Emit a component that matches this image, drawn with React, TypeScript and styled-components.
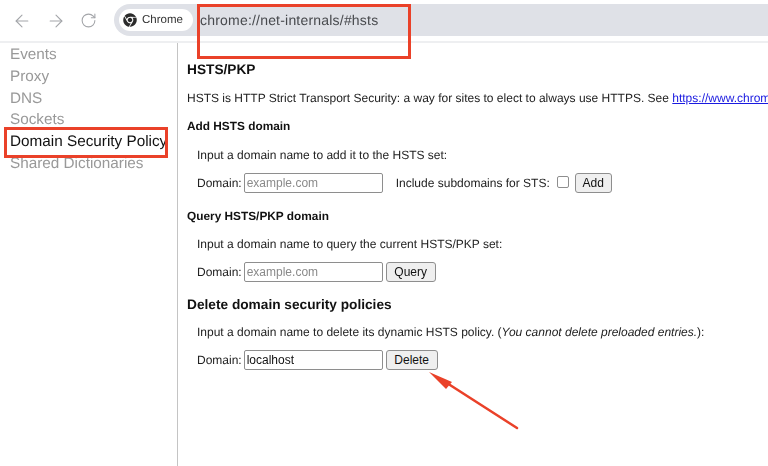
import { ArrowLeft, ArrowRight, RotateCw } from "lucide-react";
import { FaChrome } from "react-icons/fa";
import styled, { createGlobalStyle } from "styled-components";

const GlobalStyle = createGlobalStyle`
	html, body {
		margin: 0;
		padding: 0;
		background: #fff;
		overflow: hidden;
	}
	body {
		font-family: "Liberation Sans", Arial, sans-serif;
		color: #222;
		text-rendering: geometricPrecision;
	}
`;

const Page = styled.div`
	position: relative;
	width: 768px;
	height: 466px;
	overflow: hidden;
	filter: blur(0.35px);
`;

const Toolbar = styled.header`
	display: flex;
	align-items: center;
	height: 43px;
	padding-left: 12px;
	box-sizing: border-box;
	border-bottom: 2px solid #eeeff1;
`;

const NavIcons = styled.div`
	display: flex;
	align-items: center;
	gap: 14px;
	width: 102px;
	color: #a3a5a9;
`;

const Omnibox = styled.div`
	flex: 1;
	display: flex;
	align-items: center;
	gap: 7px;
	height: 32px;
	margin-bottom: 1px;
	padding-left: 5px;
	background: #dfe1e7;
	border-radius: 16px 0 0 16px;
`;

const Chip = styled.div`
	display: flex;
	align-items: center;
	gap: 5px;
	width: 74px;
	height: 22px;
	padding-left: 4px;
	box-sizing: border-box;
	background: #fff;
	border-radius: 11px;
	font-size: 11.5px;
	color: #333;
`;

const Url = styled.span`
	font-size: 14px;
	letter-spacing: 0.2px;
	color: #47494d;
`;

const Body = styled.div`
	display: flex;
	height: 423px;
`;

const Sidebar = styled.nav`
	display: flex;
	flex-direction: column;
	width: 178px;
	box-sizing: border-box;
	padding: 1px 0 0 10px;
	border-right: 1px solid #c4c4c4;
	white-space: nowrap;
	overflow: hidden;
`;

const NavItem = styled.div<{ $active?: boolean }>`
	height: 21.8px;
	line-height: 21.8px;
	font-size: 15.3px;
	color: ${(p) => (p.$active ? "#111" : "#999")};
`;

const Content = styled.main`
	flex: 1;
	display: flex;
	flex-direction: column;
	padding: 17px 0 0 9px;
	overflow: hidden;
	white-space: nowrap;
	font-size: 12px;
`;

const MainTitle = styled.h1<{ $height?: number }>`
	margin: 0;
	height: ${(p) => p.$height ?? 20}px;
	line-height: 20px;
	font-size: 13.7px;
	font-weight: 700;
	color: #111;
`;

const SubTitle = styled.h2<{ $height?: number }>`
	margin: 0;
	height: ${(p) => p.$height ?? 20}px;
	line-height: 20px;
	font-size: 11.85px;
	font-weight: 700;
	color: #111;
`;

const Text = styled.p<{ $indent?: boolean }>`
	margin: 8px 0;
	height: 20px;
	line-height: 20px;
	padding-left: ${(p) => (p.$indent ? "10px" : "0")};
	color: #222;
`;

const Link = styled.a`
	color: #1a1ae0;
	text-decoration: underline;
`;

const FormRow = styled.div`
	display: flex;
	align-items: center;
	height: 20px;
	padding-left: 10px;
	margin-bottom: 13px;
	color: #222;
`;

const DomainInput = styled.input`
	width: 139px;
	height: 20px;
	box-sizing: border-box;
	margin: 0 3px 0 2px;
	padding: 0 2px;
	border: 1px solid #8e8e8e;
	border-radius: 2px;
	font-family: inherit;
	font-size: 12px;
	color: #111;
	&::placeholder {
		color: #8a8a8a;
		opacity: 1;
	}
`;

const Button = styled.button<{ $width: number }>`
	width: ${(p) => p.$width}px;
	height: 20px;
	box-sizing: border-box;
	padding: 0;
	background: #efefef;
	border: 1px solid #8e8e8e;
	border-radius: 3px;
	font-family: inherit;
	font-size: 12px;
	color: #111;
`;

const SubdomainLabel = styled.label`
	display: flex;
	align-items: center;
	margin-left: 10px;
`;

const Check = styled.span`
	display: block;
	width: 12px;
	height: 12px;
	box-sizing: border-box;
	margin: -3px 6px 0 7px;
	border: 1px solid #8e8e8e;
	border-radius: 2px;
	background: #fff;
`;

const Callout = styled.div<{ $x: number; $y: number; $w: number; $h: number }>`
	position: absolute;
	left: ${(p) => p.$x}px;
	top: ${(p) => p.$y}px;
	width: ${(p) => p.$w}px;
	height: ${(p) => p.$h}px;
	box-sizing: border-box;
	border: 3px solid #ea4129;
`;

const ArrowMark = styled.svg`
	position: absolute;
	left: 420px;
	top: 360px;
`;

function DomainRow({ placeholder, value }: { placeholder?: string; value?: string }) {
	return (
		<>
			Domain:
			<DomainInput placeholder={placeholder} defaultValue={value} />
		</>
	);
}

export default function App() {
	return (
		<Page>
			<GlobalStyle />
			<Toolbar>
				<NavIcons>
					<ArrowLeft size={20} strokeWidth={1.3} />
					<ArrowRight size={20} strokeWidth={1.3} />
					<RotateCw size={17} strokeWidth={1.5} />
				</NavIcons>
				<Omnibox>
					<Chip>
						<FaChrome size={14} color="#2b2b2b" />
						Chrome
					</Chip>
					<Url>chrome://net-internals/#hsts</Url>
				</Omnibox>
			</Toolbar>
			<Body>
				<Sidebar>
					<NavItem>Events</NavItem>
					<NavItem>Proxy</NavItem>
					<NavItem>DNS</NavItem>
					<NavItem>Sockets</NavItem>
					<NavItem $active>Domain Security Policy</NavItem>
					<NavItem>Shared Dictionaries</NavItem>
				</Sidebar>
				<Content>
					<MainTitle>HSTS/PKP</MainTitle>
					<Text>
						HSTS is HTTP Strict Transport Security: a way for sites to elect to always use HTTPS. See{" "}
						<Link>https://www.chromium.org/hsts/</Link>
					</Text>
					<SubTitle $height={21}>Add HSTS domain</SubTitle>
					<Text $indent>Input a domain name to add it to the HSTS set:</Text>
					<FormRow>
						<DomainRow placeholder="example.com" />
						<SubdomainLabel>
							Include subdomains for STS:
							<Check />
						</SubdomainLabel>
						<Button $width={37}>Add</Button>
					</FormRow>
					<SubTitle>Query HSTS/PKP domain</SubTitle>
					<Text $indent>Input a domain name to query the current HSTS/PKP set:</Text>
					<FormRow>
						<DomainRow placeholder="example.com" />
						<Button $width={50}>Query</Button>
					</FormRow>
					<MainTitle $height={19}>Delete domain security policies</MainTitle>
					<Text $indent>
						Input a domain name to delete its dynamic HSTS policy. (<em>You cannot delete preloaded entries.</em>):
					</Text>
					<FormRow>
						<DomainRow value="localhost" />
						<Button $width={52}>Delete</Button>
					</FormRow>
				</Content>
			</Body>
			<Callout $x={197} $y={4} $w={214} $h={55} />
			<Callout $x={4} $y={127} $w={164} $h={31} />
			<ArrowMark width="110" height="80" viewBox="0 0 110 80">
				<path d="M97 68 L30 25" stroke="#ea4129" strokeWidth="2.6" strokeLinecap="round" />
				<path d="M9 12 L32 22 L26 29 Z" fill="#ea4129" />
			</ArrowMark>
		</Page>
	);
}
